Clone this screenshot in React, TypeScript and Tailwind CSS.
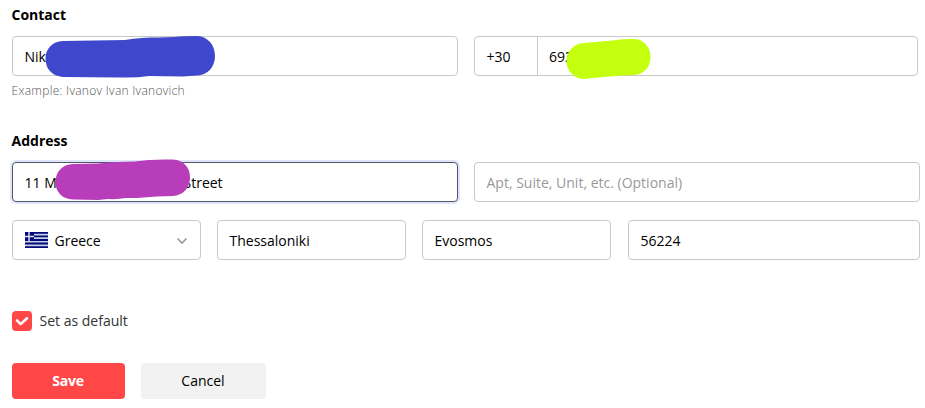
import type { ReactNode } from "react";

const base = "relative flex h-10 items-center rounded-[4px] border pl-[11.500px] pr-3 pt-[2px] text-sm";

function Field({ className = "", children }: { className?: string; children: ReactNode }) {
  return <div className={`${base} border-[#c8c8c8] ${className}`}>{children}</div>;
}

function GreekFlag() {
  return (
    <svg className="-mt-[2px] mr-[7px] h-4 w-[23px] shrink-0" viewBox="0 0 23 16">
      <rect width="23" height="16" fill="#c3d0e2" />
      <path
        d="M0 .8h23M9 4.400h14M9 8h14M0 11.500h23M0 15.200h23"
        stroke="#07077d"
        strokeWidth="1.8"
      />
      <rect width="9" height="9" fill="#07077d" />
      <path d="M4 0v9M0 4.500h9" stroke="#dfe6f2" strokeWidth="1.400" />
    </svg>
  );
}

export default function App() {
  return (
    <form className="h-[408px] w-[925px] overflow-hidden bg-white pl-3 pt-[5px] font-['Open_Sans','Noto_Sans',sans-serif] text-sm text-black">
      <h2 className="-ml-[0.500px] h-[31px] font-bold leading-5">Contact</h2>
      <div className="flex gap-4">
        <Field className="w-[446px]">
          <span>Nik</span>
          <svg className="absolute left-[32px] top-[-2px] h-[44px] w-[172px]" viewBox="45 35 172 44">
            <path
              d="M63 41 L125 40 C136 38 148 37.500 158 37.500 L175 37 Q183 36 197 36 C208 36.500 215 45 215 56 C215 67 208 75 197 75.500 L183 76.500 L149 76 Q136 78 120 77.500 L63 77 C52 76 45.500 69 45.500 58.500 C45.500 49 52 41.500 63 41Z"
              fill="#3f48cc"
            />
          </svg>
        </Field>
        <div className="relative flex h-10 w-[444px] items-stretch rounded-[4px] border border-[#c8c8c8] text-sm leading-10">
          <span className="w-[62px] pl-[11.500px]">+30</span>
          <span className="border-l border-[#c8c8c8] pl-[11px]">693</span>
          <svg className="absolute left-[91px] top-[0px] h-[44px] w-[87px]" viewBox="566 37 87 44">
            <path
              d="M584 43 L613 40.500 Q620 38.500 634 39 C644 39.500 650.500 47 650.500 57 C650.500 67 644 74.500 634 75 L622 75.500 L603 77 L584 79 C574 78.500 566.500 71 566.500 61 C566.500 51 574 43.500 584 43Z"
              fill="#c4ff0e"
            />
          </svg>
        </div>
      </div>
      <p className="-ml-[0.500px] mt-[5px] h-5 text-xs font-light leading-5 tracking-[0.290px] text-[#555]">Example: Ivanov Ivan Ivanovich</p>
      <h2 className="-ml-[0.500px] mt-[30px] h-[31px] font-bold leading-5">Address</h2>
      <div className="flex gap-4">
        <div className={`${base} w-[446px] border-[#545563] shadow-[0_0_0_2px_#dfe6fb]`}>
          <span className="w-[159px]">11 M</span>
          <span>Street</span>
          <svg className="absolute left-[42px] top-[-5px] h-[44px] w-[137px]" viewBox="55 158 137 44">
            <path
              d="M73 164 L98 163.500 Q115 161.500 135 161.500 Q150 159 173 159.500 C183 160 190 167 190 177 C190 188 183 195.500 173 196 L157 196.500 L137 198 L126 198 Q117 199.500 108 199 L98 200 L73 199.500 C62 199 55.500 192 55.500 182 C55.500 172 62 164.500 73 164Z"
              fill="#b83dba"
            />
          </svg>
        </div>
        <Field className="w-[446px]">
          <span className="text-[#999]">Apt, Suite, Unit, etc. (Optional)</span>
        </Field>
      </div>
      <div className="mt-[18px] flex gap-4">
        <Field className="w-[189px]">
          <GreekFlag />
          <span>Greece</span>
          <svg className="-mt-px ml-auto mr-[0.500px] h-3 w-3" viewBox="0 0 12 12" fill="none">
            <path d="m1.500 3.500 4.500 4.500 4.500-4.500" stroke="#999" strokeWidth="1.600" />
          </svg>
        </Field>
        <Field className="w-[189px]">Thessaloniki</Field>
        <Field className="w-[189px]">Evosmos</Field>
        <Field className="ml-px w-[292px]">56224</Field>
      </div>
      <label className="mt-[51px] flex h-5 items-center gap-[7.500px] text-[#333]">
        <span className="flex h-5 w-5 items-center justify-center rounded-[4px] bg-[#ff4747]">
          <svg className="h-5 w-5" viewBox="0 0 20 20" fill="none">
            <path d="m5 9.400 3.700 3.700 6.300-5.800" stroke="white" strokeWidth="2.600" strokeLinecap="round" strokeLinejoin="round" />
          </svg>
        </span>
        Set as default
      </label>
      <div className="mt-8 flex gap-4">
        <button type="button" className="h-9 w-[113px] rounded-[4px] bg-[#ff4747] pr-px font-bold tracking-[-0.200px] text-white">Save</button>
        <button type="button" className="h-9 w-[125px] rounded-[4px] bg-[#f2f2f2] pr-px">Cancel</button>
      </div>
    </form>
  );
}
